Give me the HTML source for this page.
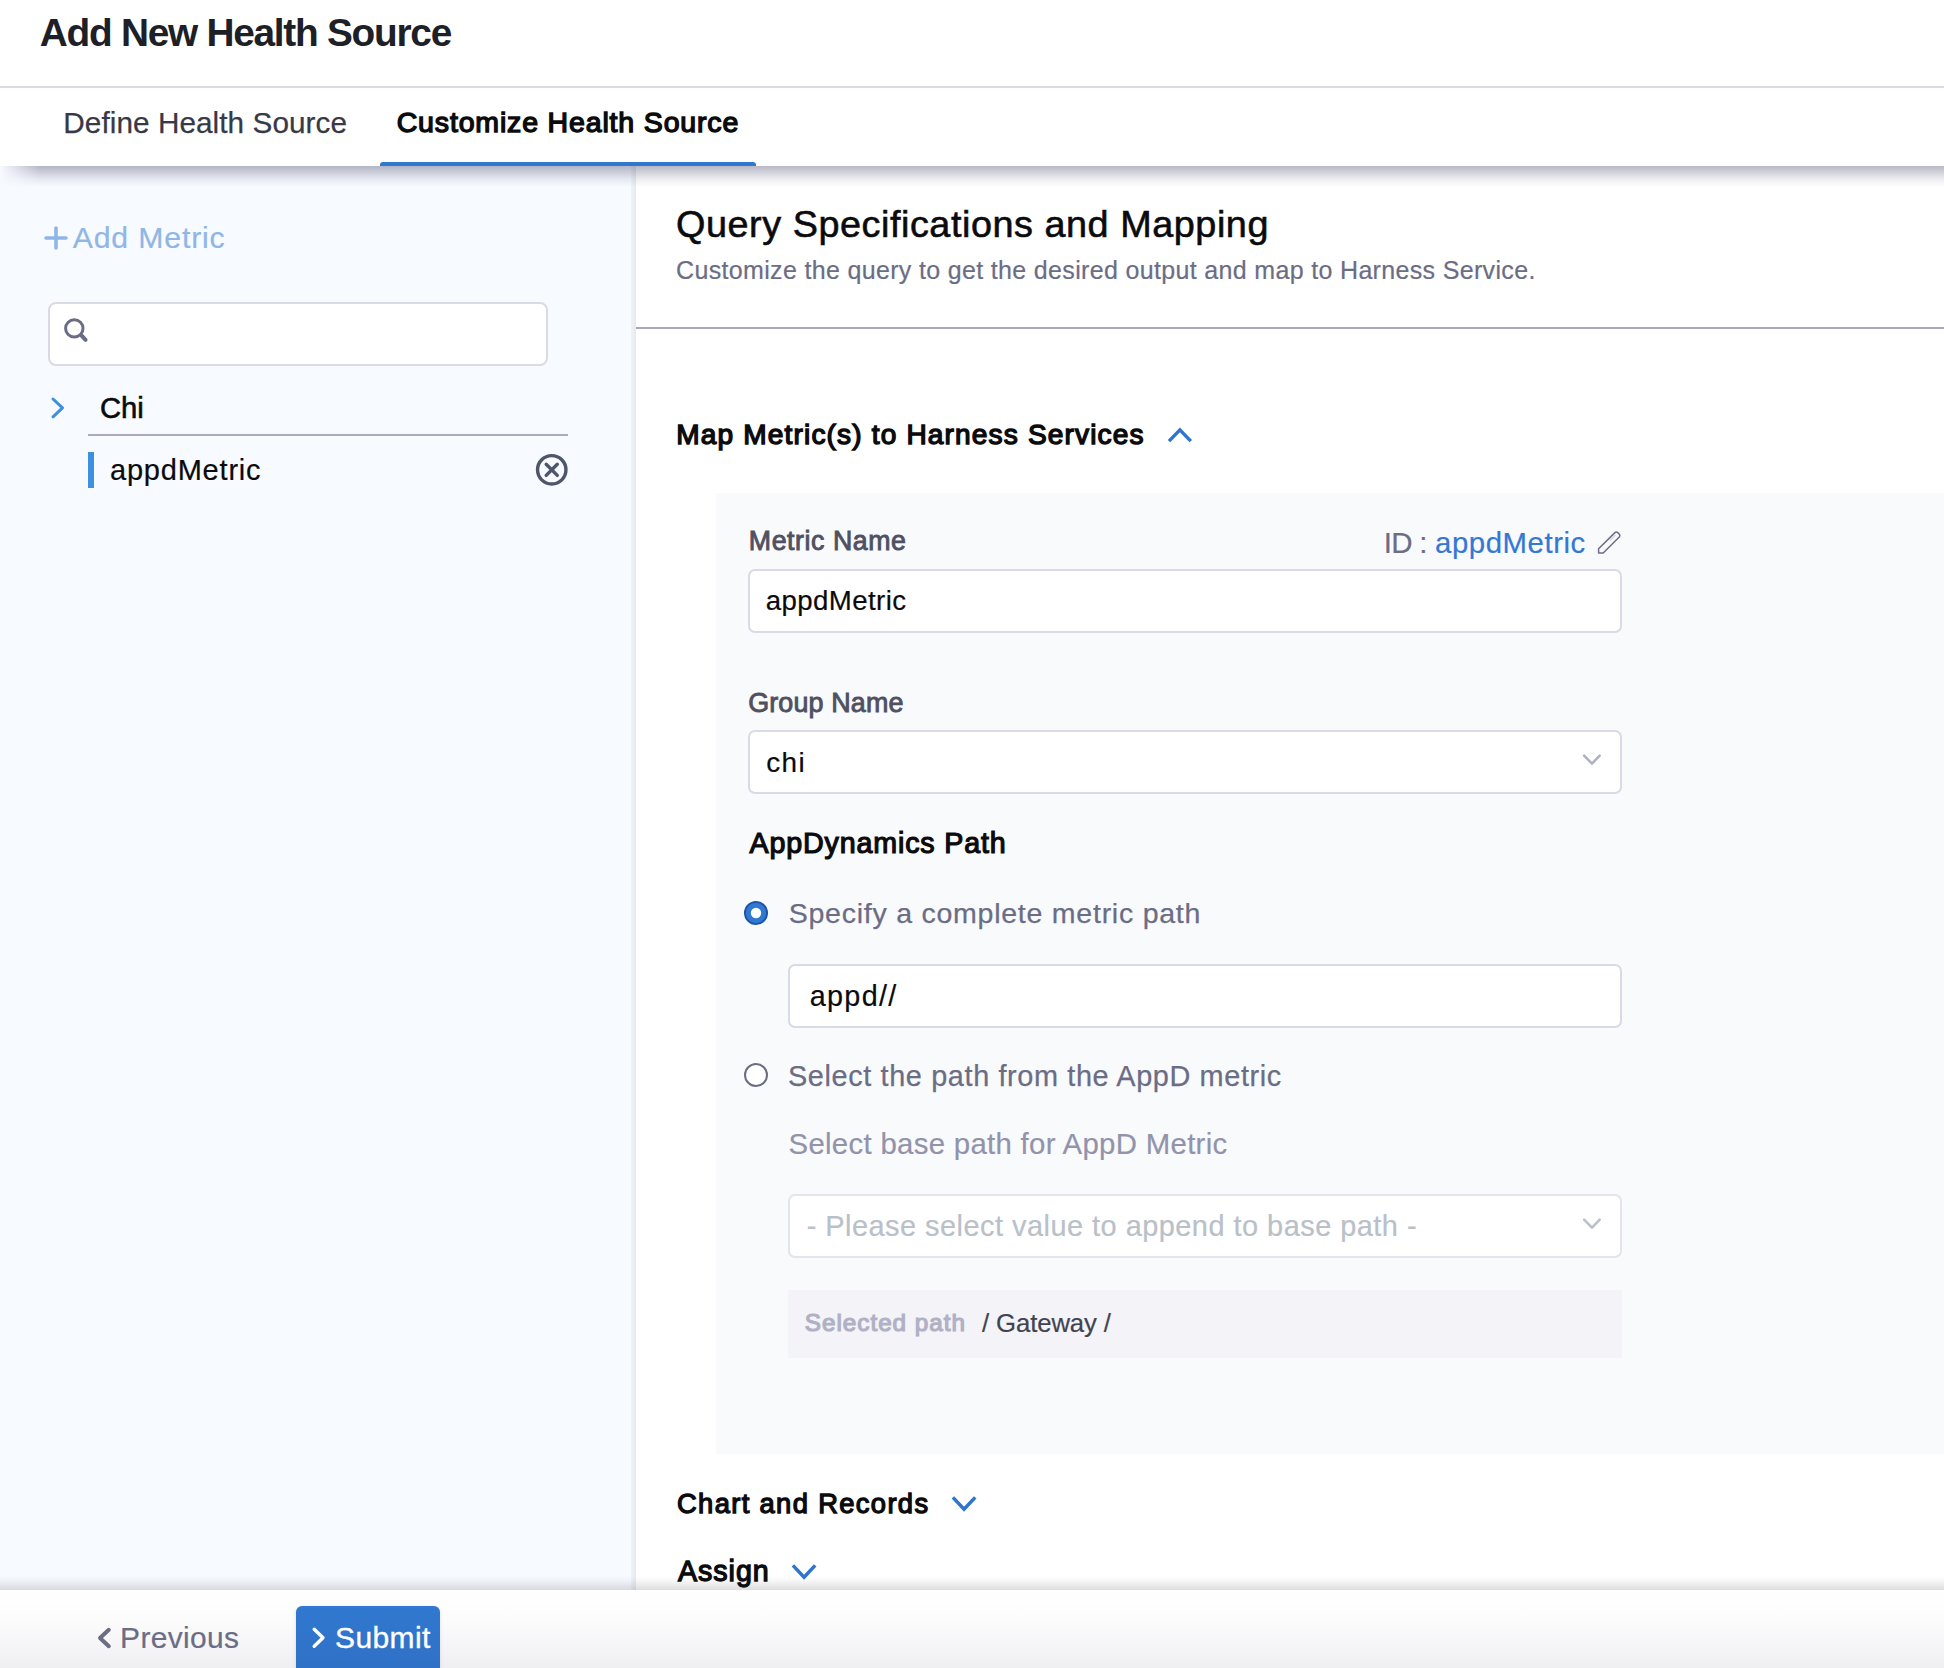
<!DOCTYPE html>
<html><head><meta charset="utf-8"><title>Add New Health Source</title>
<style>
html,body{margin:0;padding:0;}
body{width:1944px;height:1668px;position:relative;overflow:hidden;background:#fff;font-family:"Liberation Sans",sans-serif;}
.t{position:absolute;white-space:pre;font-family:"Liberation Sans",sans-serif;}
.b{position:absolute;box-sizing:border-box;}
svg{position:absolute;overflow:visible;}
</style></head><body>
<div class="b" style="left:0px;top:166px;width:636px;height:1502px;background:#f7faff;"></div>
<div class="b" style="left:631px;top:166px;width:5px;height:1502px;background:linear-gradient(to right,#f0f3f7,#e6eaee);"></div>
<div class="b" style="left:716px;top:493px;width:1228px;height:961px;background:#f9fafc;"></div>
<div class="b" style="left:636px;top:327px;width:1308px;height:2px;background:#a8a9bc;"></div>
<div class="b" style="left:0px;top:0px;width:1944px;height:87px;background:#fff;"></div>
<div class="b" style="left:0px;top:86px;width:1944px;height:2px;background:#d9dae5;"></div>
<div class="t" style="left:39.75px;top:8px;font-size:38.808px;line-height:50px;font-weight:700;letter-spacing:-1.258px;color:#1d2027;">Add New Health Source</div>
<div class="b" style="left:0px;top:88px;width:1944px;height:78px;background:#fff;"></div>
<div class="t" style="left:63.30px;top:103px;font-size:29.724px;line-height:39px;font-weight:400;letter-spacing:0.063px;color:#383946;-webkit-text-stroke:0.25px #383946;">Define Health Source</div>
<div class="t" style="left:396.70px;top:104px;font-size:28.488px;line-height:37px;font-weight:400;letter-spacing:0.855px;color:#0b0b0d;-webkit-text-stroke:1.4px #0b0b0d;">Customize Health Source</div>
<div class="b" style="left:380px;top:162px;width:376px;height:4px;background:#3077d0;border-radius:3px 3px 0 0;"></div>
<div class="b" style="left:0;top:166px;width:1944px;height:21px;background:linear-gradient(to bottom,rgba(60,62,95,0.36),rgba(60,62,95,0.26) 25%,rgba(60,62,95,0.10) 60%,rgba(60,62,95,0.03) 85%,rgba(60,62,95,0));-webkit-mask-image:linear-gradient(to right,transparent 0,#000 40px);"></div>
<svg style="left:44px;top:226px" width="24" height="24" viewBox="0 0 24 24"><path d="M12 2V22M2 12H22" stroke="#8fb6e6" stroke-width="3.6" stroke-linecap="round"/></svg>
<div class="t" style="left:72.70px;top:218px;font-size:30.233px;line-height:39px;font-weight:400;letter-spacing:0.844px;color:#8fb6e6;-webkit-text-stroke:0.2px #8fb6e6;">Add Metric</div>
<div class="b" style="left:48px;top:302px;width:500px;height:64px;background:#fff;border:2px solid #d9dae6;border-radius:8px;"></div>
<svg style="left:60px;top:314px" width="32" height="32" viewBox="0 0 32 32"><circle cx="14.3" cy="14.4" r="8.7" fill="none" stroke="#6b6d85" stroke-width="3"/><path d="M21.5 21.5L25.6 25.8" stroke="#6b6d85" stroke-width="4" stroke-linecap="round"/></svg>
<svg style="left:48px;top:394px" width="20" height="28" viewBox="0 0 20 28"><path d="M5 5L14.5 13.9L5 22.8" fill="none" stroke="#3d8fe0" stroke-width="3" stroke-linecap="round" stroke-linejoin="round"/></svg>
<div class="t" style="left:100.00px;top:389px;font-size:29.215px;line-height:38px;font-weight:400;letter-spacing:0.000px;color:#0b0b0d;-webkit-text-stroke:0.6px #0b0b0d;">Chi</div>
<div class="b" style="left:88px;top:434px;width:480px;height:2px;background:#a9aabd;"></div>
<div class="b" style="left:88px;top:452px;width:6px;height:36px;background:#3d8fe0;"></div>
<div class="t" style="left:110.00px;top:451px;font-size:28.997px;line-height:38px;font-weight:400;letter-spacing:0.800px;color:#0b0b0d;-webkit-text-stroke:0.2px #0b0b0d;">appdMetric</div>
<svg style="left:534px;top:452px" width="36" height="36" viewBox="0 0 36 36"><circle cx="17.75" cy="17.8" r="14.2" fill="none" stroke="#4f5669" stroke-width="3.4"/><path d="M12.2 12.2L23.3 23.4M23.3 12.2L12.2 23.4" stroke="#4f5669" stroke-width="3.4" stroke-linecap="round"/></svg>
<div class="t" style="left:676.00px;top:200px;font-size:37.791px;line-height:49px;font-weight:400;letter-spacing:0.548px;color:#0b0b0d;-webkit-text-stroke:0.6px #0b0b0d;">Query Specifications and Mapping</div>
<div class="t" style="left:676.00px;top:254px;font-size:25.000px;line-height:32px;font-weight:400;letter-spacing:0.336px;color:#6b6d85;-webkit-text-stroke:0.2px #6b6d85;">Customize the query to get the desired output and map to Harness Service.</div>
<div class="t" style="left:676.30px;top:417px;font-size:28.052px;line-height:36px;font-weight:400;letter-spacing:1.159px;color:#0b0b0d;-webkit-text-stroke:1.4px #0b0b0d;">Map Metric(s) to Harness Services</div>
<svg style="left:1160px;top:415px" width="40" height="40" viewBox="0 0 40 40"><path d="M9 26.1L19.9 14.9L30.8 26.1" fill="none" stroke="#2f74cf" stroke-width="3.5" stroke-linejoin="miter"/></svg>
<div class="t" style="left:748.80px;top:524px;font-size:26.744px;line-height:35px;font-weight:400;letter-spacing:0.560px;color:#4f5162;-webkit-text-stroke:0.9px #4f5162;">Metric Name</div>
<div class="t" style="left:1383.80px;top:524px;font-size:29.506px;line-height:38px;font-weight:400;letter-spacing:-0.750px;color:#6b6d85;-webkit-text-stroke:0.2px #6b6d85;">ID :</div>
<div class="t" style="left:1435.00px;top:524px;font-size:29.360px;line-height:38px;font-weight:400;letter-spacing:0.556px;color:#3478d4;-webkit-text-stroke:0.2px #3478d4;">appdMetric</div>
<svg style="left:1590px;top:525px" width="40" height="35" viewBox="0 0 40 35"><path d="M8.6 23.8L25.2 7.4Q26.4 6.6 27.8 7.6L29.4 9.2Q30.3 10.6 29.5 11.8L13.2 28L8.6 28Z" fill="none" stroke="#6b6d85" stroke-width="1.5" stroke-linejoin="round"/><path d="M20.3 15.3L25.3 10.4" stroke="#d3d4de" stroke-width="1.2" stroke-linecap="round"/></svg>
<div class="b" style="left:748px;top:569px;width:874px;height:64px;background:#fff;border:2px solid #d9dae6;border-radius:7px;"></div>
<div class="t" style="left:765.80px;top:583px;font-size:27.616px;line-height:36px;font-weight:400;letter-spacing:0.400px;color:#0b0b0d;-webkit-text-stroke:0.2px #0b0b0d;">appdMetric</div>
<div class="t" style="left:748.20px;top:686px;font-size:26.890px;line-height:35px;font-weight:400;letter-spacing:0.156px;color:#4f5162;-webkit-text-stroke:0.9px #4f5162;">Group Name</div>
<div class="b" style="left:748px;top:730px;width:874px;height:64px;background:#fff;border:2px solid #d9dae6;border-radius:7px;"></div>
<div class="t" style="left:766.20px;top:745px;font-size:27.907px;line-height:36px;font-weight:400;letter-spacing:1.450px;color:#0b0b0d;-webkit-text-stroke:0.2px #0b0b0d;">chi</div>
<svg style="left:1576px;top:746px" width="32" height="28" viewBox="0 0 32 28"><path d="M8.1 9.6L16 17.6L23.7 9.6" fill="none" stroke="#b0b1c4" stroke-width="2.6" stroke-linecap="round" stroke-linejoin="round"/></svg>
<div class="t" style="left:749.60px;top:825px;font-size:28.634px;line-height:37px;font-weight:400;letter-spacing:0.847px;color:#0b0b0d;-webkit-text-stroke:1.2px #0b0b0d;">AppDynamics Path</div>
<svg style="left:740px;top:897px" width="32" height="32" viewBox="0 0 32 32"><circle cx="16" cy="16" r="11.1" fill="#3178d0" stroke="#1c52aa" stroke-width="1.8"/><circle cx="16" cy="16" r="5.2" fill="#fff"/></svg>
<div class="t" style="left:788.70px;top:895px;font-size:28.561px;line-height:37px;font-weight:400;letter-spacing:0.738px;color:#6b6d85;-webkit-text-stroke:0.25px #6b6d85;">Specify a complete metric path</div>
<div class="b" style="left:788px;top:964px;width:834px;height:64px;background:#fff;border:2px solid #d9dae6;border-radius:7px;"></div>
<div class="t" style="left:809.70px;top:978px;font-size:28.779px;line-height:37px;font-weight:400;letter-spacing:1.340px;color:#0b0b0d;-webkit-text-stroke:0.2px #0b0b0d;">appd//</div>
<svg style="left:740px;top:1059px" width="32" height="32" viewBox="0 0 32 32"><circle cx="16" cy="16" r="11" fill="#fff" stroke="#6b6d85" stroke-width="2"/></svg>
<div class="t" style="left:788.00px;top:1057px;font-size:28.852px;line-height:38px;font-weight:400;letter-spacing:0.626px;color:#6b6d85;-webkit-text-stroke:0.25px #6b6d85;">Select the path from the AppD metric</div>
<div class="t" style="left:788.50px;top:1125px;font-size:29.360px;line-height:38px;font-weight:400;letter-spacing:0.306px;color:#9293ab;-webkit-text-stroke:0.2px #9293ab;">Select base path for AppD Metric</div>
<div class="b" style="left:788px;top:1194px;width:834px;height:64px;background:#fff;border:2px solid #e3e4ec;border-radius:7px;"></div>
<div class="t" style="left:806.70px;top:1207px;font-size:28.924px;line-height:38px;font-weight:400;letter-spacing:0.482px;color:#b9c0c8;-webkit-text-stroke:0.2px #b9c0c8;">- Please select value to append to base path -</div>
<svg style="left:1576px;top:1210px" width="32" height="28" viewBox="0 0 32 28"><path d="M8.1 9.6L16 17.6L23.7 9.6" fill="none" stroke="#bcbfcc" stroke-width="2.6" stroke-linecap="round" stroke-linejoin="round"/></svg>
<div class="b" style="left:788px;top:1290px;width:834px;height:68px;background:#f3f3f8;"></div>
<div class="t" style="left:804.80px;top:1307px;font-size:24.273px;line-height:32px;font-weight:400;letter-spacing:0.983px;color:#b0b1c4;-webkit-text-stroke:1.2px #b0b1c4;">Selected path</div>
<div class="t" style="left:982.00px;top:1307px;font-size:25.727px;line-height:33px;font-weight:400;letter-spacing:-0.110px;color:#424350;-webkit-text-stroke:0.2px #424350;">/ Gateway /</div>
<div class="t" style="left:677.00px;top:1486px;font-size:27.326px;line-height:36px;font-weight:400;letter-spacing:1.363px;color:#0b0b0d;-webkit-text-stroke:1.3px #0b0b0d;">Chart and Records</div>
<svg style="left:944px;top:1484px" width="40" height="40" viewBox="0 0 40 40"><path d="M8.9 13.4L20.05 25.2L31.2 13.4" fill="none" stroke="#2f74cf" stroke-width="3.5" stroke-linejoin="miter"/></svg>
<div class="t" style="left:678.00px;top:1553px;font-size:28.634px;line-height:37px;font-weight:400;letter-spacing:0.960px;color:#0b0b0d;-webkit-text-stroke:1.3px #0b0b0d;">Assign</div>
<svg style="left:784px;top:1552px" width="40" height="40" viewBox="0 0 40 40"><path d="M8.9 13.4L20.05 25.2L31.2 13.4" fill="none" stroke="#2f74cf" stroke-width="3.5" stroke-linejoin="miter"/></svg>
<div class="b" style="left:0;top:1576px;width:1944px;height:14px;background:linear-gradient(to bottom,rgba(35,35,45,0),rgba(35,35,45,0.04) 35%,rgba(35,35,45,0.11) 75%,rgba(35,35,45,0.15));"></div>
<div class="b" style="left:0px;top:1590px;width:1944px;height:78px;background:linear-gradient(to bottom,#ffffff 0%,#fcfcfd 40%,#efeff2 100%);"></div>
<svg style="left:92px;top:1622px" width="24" height="32" viewBox="0 0 24 32"><path d="M16.8 7.8L8 16L16.8 24.2" fill="none" stroke="#6b6d85" stroke-width="4" stroke-linecap="round" stroke-linejoin="round"/></svg>
<div class="t" style="left:120.10px;top:1618px;font-size:29.942px;line-height:39px;font-weight:400;letter-spacing:0.343px;color:#6b6d85;-webkit-text-stroke:0.2px #6b6d85;">Previous</div>
<div class="b" style="left:296px;top:1606px;width:144px;height:70px;background:linear-gradient(to bottom,#3178d0,#2f70c5);border-radius:6px;box-shadow:0 0 1px rgba(40,41,61,0.08),0 1px 4px rgba(40,41,61,0.10);"></div>
<svg style="left:306px;top:1622px" width="24" height="32" viewBox="0 0 24 32"><path d="M8.2 7.3L17 15.8L8.2 24.3" fill="none" stroke="#fff" stroke-width="3.4" stroke-linecap="round" stroke-linejoin="round"/></svg>
<div class="t" style="left:335.00px;top:1618px;font-size:30.015px;line-height:39px;font-weight:400;letter-spacing:0.400px;color:#ffffff;-webkit-text-stroke:0.35px #ffffff;">Submit</div>
</body></html>
